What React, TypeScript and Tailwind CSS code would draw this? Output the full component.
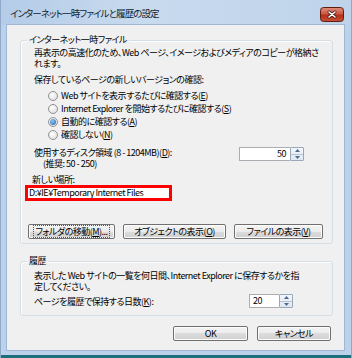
import React from 'react';

const font = "font-['Noto_Sans_CJK_JP','Noto_Sans',sans-serif] [font-feature-settings:'palt']";

const U = ({ children }: { children: string }) => (
  <span className="underline decoration-1 underline-offset-[1px]">{children}</span>
);

const Radio = ({ checked, children }: { checked?: boolean; children: React.ReactNode }) => (
  <div className="flex items-center h-[13px] pl-[27px] gap-[3px]">
    <div className="w-[10px] h-[10px] shrink-0 rounded-full border border-[#929292] bg-[radial-gradient(circle_at_40%_35%,#ffffff,#d8d8d8)] flex items-center justify-center">
      {checked && (
        <div className="w-[6px] h-[6px] rounded-full bg-[radial-gradient(circle_at_40%_35%,#8ec4f2,#1c5fb4)]" />
      )}
    </div>
    <span>{children}</span>
  </div>
);

const Btn = ({ w, children }: { w: string; children: React.ReactNode }) => (
  <div
    className={`${w} h-[15px] shrink-0 rounded-[2px] border border-[#707070] bg-[linear-gradient(#f4f4f4,#ebebeb_50%,#dddddd_50%,#cfcfcf)] shadow-[inset_0_0_0_1px_#fcfcfc] flex items-center justify-center leading-none`}
  >
    {children}
  </div>
);

const Spin = ({ w, value, left }: { w: string; value: string; left?: boolean }) => (
  <div className="flex h-[14px] shrink-0">
    <div
      className={`${w} h-full bg-white border border-[#abadb3] border-r-0 leading-[12px] ${left ? 'text-left pl-[3px]' : 'text-right pr-[4px]'}`}
    >
      {value}
    </div>
    <div className="w-[14px] h-full border border-[#9aa9ba] rounded-[1px] bg-[linear-gradient(#f3f6fa,#dfe7f0)] flex flex-col">
      <div className="flex-1 flex items-center justify-center border-b border-[#b6c3d2]">
        <svg width="5" height="3" viewBox="0 0 5 3"><path d="M0 3 L2.5 0 L5 3 Z" fill="#4a6a92" /></svg>
      </div>
      <div className="flex-1 flex items-center justify-center">
        <svg width="5" height="3" viewBox="0 0 5 3"><path d="M0 0 L2.5 3 L5 0 Z" fill="#4a6a92" /></svg>
      </div>
    </div>
  </div>
);

const GroupLabel = ({ children }: { children: string }) => (
  <div className="absolute left-[6px] top-[-7px] px-[2px] bg-[#f0f0f0] leading-[12px]">{children}</div>
);

// Vista style red close button
const CloseIcon = () => (
  <svg width="24" height="15" viewBox="0 0 24 15" className="mt-[1px]">
    <defs>
      <linearGradient id="cg" x1="0" y1="0" x2="0" y2="1">
        <stop offset="0" stopColor="#e08e7c" />
        <stop offset="0.45" stopColor="#cc5a44" />
        <stop offset="0.55" stopColor="#b5301a" />
        <stop offset="1" stopColor="#c85236" />
      </linearGradient>
    </defs>
    <rect x="0.5" y="0.5" width="23" height="14" rx="3" fill="url(#cg)" stroke="#5e1c10" />
    <path d="M9 5 L15 10 M15 5 L9 10" stroke="#4a1a10" strokeWidth="3" strokeLinecap="round" />
    <path d="M9 5 L15 10 M15 5 L9 10" stroke="#ffffff" strokeWidth="1.6" strokeLinecap="round" />
  </svg>
);

export default function App() {
  return (
    <div className={`w-[352px] h-[358px] flex flex-col bg-[#bcd2ea] border-x border-[#8ea9c9] text-[9px] tracking-[-0.5px] whitespace-nowrap text-black ${font}`}>
      {/* title bar */}
      <div className="h-[25px] flex items-start justify-between pl-[9px] pr-[7px] pt-[6px] shrink-0 bg-[linear-gradient(90deg,#b4cce8,#c8daee_40%,#bfd4eb)]">
        <span className="text-[9.5px] tracking-[-0.9px] leading-[14px] text-[#0f1e30]">インターネット一時ファイルと履歴の設定</span>
        <CloseIcon />
      </div>

      {/* client area */}
      <div className="ml-[6px] mr-[7px] h-[325px] shrink-0 bg-[#f0f0f0] shadow-[0_0_0_1px_#9fb7d4] pt-[15px]">
        {/* group 1 */}
        <div className="relative ml-[13px] w-[313px] h-[204px] border border-[#d5dde5] rounded-[3px] shadow-[inset_1px_1px_0_#ffffff]">
          <GroupLabel>インターネット一時ファイル</GroupLabel>
          <div className="pt-[6px]">
            <div className="pl-[13px] leading-[11px]">
              <div>再表示の高速化のため、Web ページ、イメージおよびメディアのコピーが格納さ</div>
              <div>れます。</div>
            </div>
            <div className="pl-[13px] mt-[5px] leading-[11px]">保存しているページの新しいバージョンの確認:</div>
            <div className="mt-[4px]">
              <Radio>Web サイトを表示するたびに確認する(<U>E</U>)</Radio>
              <Radio>Internet Explorer を開始するたびに確認する(<U>S</U>)</Radio>
              <Radio checked>自動的に確認する(<U>A</U>)</Radio>
              <Radio>確認しない(<U>N</U>)</Radio>
            </div>
            <div className="mt-[6px] flex items-start pl-[13px] pr-[28px] justify-between">
              <div className="leading-[11px]">
                <div>使用するディスク領域 (8 - 1204MB)(<U>D</U>):</div>
                <div className="pl-[9px]">(推奨: 50 - 250)</div>
              </div>
              <Spin w="w-[51px]" value="50" />
            </div>
            <div className="mt-[6px] pl-[11px] leading-[10px]">新しい場所:</div>
            <div className="ml-[4px] w-[147px] h-[16px] border-[3px] border-[#ff0000] bg-white pl-[1px] leading-[10px] overflow-hidden">
              D:¥IE¥Temporary Internet Files
            </div>
            <div className="mt-[23px] flex gap-[8px] pl-[7px]">
              <Btn w="w-[87px]">
                <span className="outline outline-1 outline-dotted outline-[#555] outline-offset-[1px]">
                  フォルダの移動(<U>M</U>)...
                </span>
              </Btn>
              <Btn w="w-[103px]">オブジェクトの表示(<U>O</U>)</Btn>
              <Btn w="w-[89px]">ファイルの表示(<U>V</U>)</Btn>
            </div>
          </div>
        </div>

        {/* group 2 */}
        <div className="relative mt-[17px] ml-[13px] w-[313px] h-[55px] border border-[#d5dde5] rounded-[3px] shadow-[inset_1px_1px_0_#ffffff]">
          <GroupLabel>履歴</GroupLabel>
          <div className="pt-[8px]">
            <div className="pl-[13px] leading-[11px]">
              <div>表示した Web サイトの一覧を何日間、Internet Explorer に保存するかを指</div>
              <div>定してください。</div>
            </div>
            <div className="mt-[2px] flex items-center pl-[13px] pr-[39px] justify-between">
              <div className="leading-[11px]">ページを履歴で保持する日数(<U>K</U>):</div>
              <Spin w="w-[30px]" value="20" left />
            </div>
          </div>
        </div>

        {/* bottom buttons */}
        <div className="mt-[10px] flex justify-end gap-[9px] pr-[13px]">
          <Btn w="w-[75px]">OK</Btn>
          <Btn w="w-[74px]">キャンセル</Btn>
        </div>
      </div>

      <div className="flex-1" />
      <div className="h-[3px] bg-[#1d6f7c] shrink-0" />
    </div>
  );
}
